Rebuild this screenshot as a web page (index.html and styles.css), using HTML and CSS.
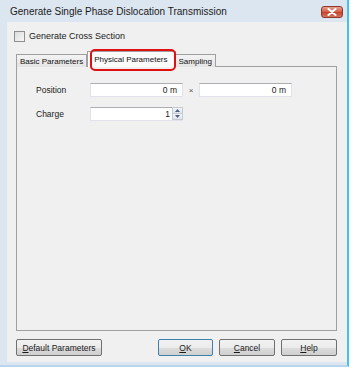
FILE: index.html
```html
<!DOCTYPE html>
<html lang="en">
<head>
    <meta charset="UTF-8">
    <meta name="viewport" content="width=device-width, initial-scale=1.0">
    <title>Generate Single Phase Dislocation Transmission</title>
    <link rel="stylesheet" href="styles.css">
</head>
<body>
    <div class="window">
        <div class="titlebar">
            <span class="title">Generate Single Phase Dislocation Transmission</span>
            <button class="close">
                <svg width="10" height="8" viewBox="0 0 10 8">
                    <path d="M1.5 1 L8.5 7 M8.5 1 L1.5 7" stroke="#fff" stroke-width="2" stroke-linecap="round"/>
                </svg>
            </button>
        </div>
        <div class="client">
            <label class="check-row">
                <span class="checkbox"></span>
                <span>Generate Cross Section</span>
            </label>

            <div class="tabs">
                <div class="tab">Basic Parameters</div>
                <div class="tab active">Physical Parameters<span class="mark"></span></div>
                <div class="tab">Sampling</div>
            </div>

            <div class="panel">
                <div class="field-row">
                    <span class="label">Position</span>
                    <div class="textbox">0 m</div>
                    <span class="times">×</span>
                    <div class="textbox">0 m</div>
                </div>
                <div class="field-row">
                    <span class="label">Charge</span>
                    <div class="spinbox">
                        <div class="spin-value">1</div>
                        <div class="spin-buttons">
                            <span class="spin-btn">
                                <svg width="5" height="3" viewBox="0 0 5 3"><path d="M0 3 L2.5 0 L5 3 Z" fill="#4d6185"/></svg>
                            </span>
                            <span class="spin-btn">
                                <svg width="5" height="3" viewBox="0 0 5 3"><path d="M0 0 L2.5 3 L5 0 Z" fill="#4d6185"/></svg>
                            </span>
                        </div>
                    </div>
                </div>
            </div>

            <div class="button-bar">
                <button class="btn wide"><u>D</u>efault Parameters</button>
                <div class="spacer"></div>
                <button class="btn default"><u>O</u>K</button>
                <button class="btn"><u>C</u>ancel</button>
                <button class="btn"><u>H</u>elp</button>
            </div>
        </div>
    </div>
</body>
</html>
```

FILE: styles.css
```css
body {
    margin: 0;
    background: #ffffff;
    font-family: "Liberation Sans", Arial, sans-serif;
    font-size: 8.5px;
    color: #1a1a1a;
}
.window {
    width: 349px;
    height: 367px;
    box-sizing: border-box;
    display: flex;
    flex-direction: column;
    background: #dce6f1;
    border-right: 2px solid #45c1ef;
    border-bottom: 2px solid #b9d4ee;
    padding: 0 0 3px 7px;
}
.titlebar {
    height: 22px;
    display: flex;
    align-items: center;
    padding-left: 3px;
    padding-right: 4px;
}
.title {
    font-size: 10px;
    color: #1b1b1b;
}
.close {
    margin-left: auto;
    width: 22px;
    height: 12px;
    margin-top: 2px;
    padding: 0;
    border: 1px solid #8c3a2c;
    border-radius: 3px;
    background: linear-gradient(#e9a08f, #d25a43 50%, #c2412a 51%, #d9735c);
    display: flex;
    align-items: center;
    justify-content: center;
}
.client {
    flex: 1;
    background: #f0f0f0;
    display: flex;
    flex-direction: column;
    padding: 0 10px 0 9px;
}
.check-row {
    display: flex;
    align-items: center;
    gap: 4px;
    margin: 8px 0 0 -2px;
    height: 12px;
    font-size: 9px;
}
.checkbox {
    width: 9px;
    height: 9px;
    border: 1px solid #8f8f8f;
    background: linear-gradient(135deg, #dcdcdc, #f7f7f7);
}
.tabs {
    display: flex;
    margin-top: 10px;
    height: 15px;
    align-items: flex-end;
    position: relative;
    z-index: 1;
}
.tab {
    height: 13px;
    box-sizing: border-box;
    border: 1px solid #a0a0a0;
    border-bottom: none;
    padding: 0 3px;
    font-size: 8px;
    line-height: 13px;
    color: #111;
    background: linear-gradient(#f3f3f3, #e4e4e4);
    margin-right: -1px;
}
.tab.active {
    height: 16px;
    margin: 0 -1px 0 1px;
    padding: 0 7px 0 6px;
    background: #fbfbfb;
    position: relative;
    line-height: 15px;
}
.mark {
    position: absolute;
    left: 2px;
    top: -3px;
    right: -1px;
    bottom: -4px;
    border: 2px solid #e01010;
    border-radius: 5px;
}
.panel {
    flex: 1;
    margin-top: -1px;
    border: 1px solid #a0a0a0;
    background: #f0f0f0;
    padding: 16px 20px 0 19px;
    display: flex;
    flex-direction: column;
    gap: 10px;
}
.field-row {
    display: flex;
    align-items: center;
    height: 14px;
}
.label {
    width: 54px;
}
.textbox {
    width: 93px;
    height: 14px;
    box-sizing: border-box;
    background: #fff;
    border: 1px solid #e2e3ea;
    border-top-color: #abadb3;
    text-align: right;
    padding-right: 5px;
    line-height: 12px;
}
.times {
    width: 16px;
    text-align: center;
    font-size: 8px;
    color: #555;
}
.spinbox {
    width: 93px;
    height: 14px;
    box-sizing: border-box;
    display: flex;
    background: #fff;
    border: 1px solid #e2e3ea;
    border-top-color: #abadb3;
}
.spin-value {
    flex: 1;
    text-align: right;
    padding-right: 2px;
    line-height: 12px;
}
.spin-buttons {
    width: 10px;
    display: flex;
    flex-direction: column;
}
.spin-btn {
    flex: 1;
    display: flex;
    align-items: center;
    justify-content: center;
    border: 1px solid #c5c9d2;
    background: linear-gradient(#f4f6f9, #dfe4ec);
    margin: -1px -1px 0 0;
}
.button-bar {
    display: flex;
    gap: 6px;
    margin: 8px 0 6px;
}
.spacer {
    flex: 1;
}
.btn {
    height: 17px;
    width: 56px;
    padding: 0;
    font-family: inherit;
    font-size: 8.5px;
    color: #1a1a1a;
    border: 1px solid #707070;
    border-radius: 2px;
    background: linear-gradient(#f2f2f2, #ebebeb 50%, #dddddd 51%, #cfcfcf);
}
.btn.wide {
    width: 86px;
}
.btn.default {
    border-color: #3c7fb1;
    width: 55px;
}
```
